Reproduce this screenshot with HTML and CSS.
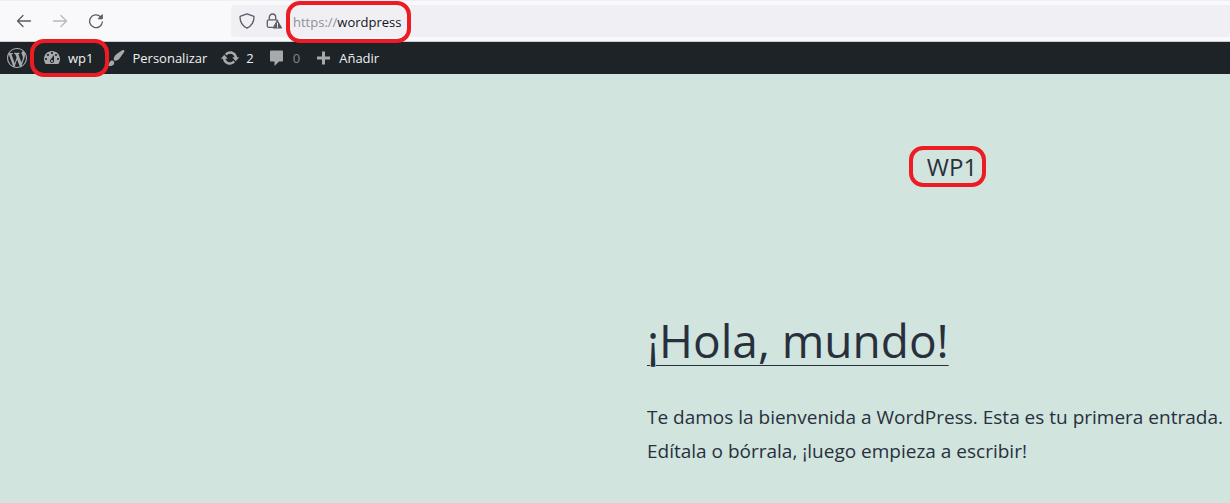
FILE: index.html
```html
<!DOCTYPE html>
<html lang="es">
<head>
<meta charset="utf-8">
<meta name="viewport" content="width=device-width, initial-scale=1">
<title>WP1</title>
<link rel="stylesheet" href="styles.css">
</head>
<body>
<header class="browser">
  <div class="browser-nav">
    <button class="nav-button" type="button" aria-label="Atrás"><svg viewBox="0 0 16 16"><path d="M14.500 8H1.500M7 2.500 1.500 8 7 13.500"/></svg></button>
    <button class="nav-button" type="button" aria-label="Adelante" disabled><svg viewBox="0 0 16 16"><path d="M1.500 8h13M9 2.500 14.500 8 9 13.500"/></svg></button>
    <button class="nav-button" type="button" aria-label="Recargar"><svg viewBox="0 0 16 16"><path d="M12.500 3.700A6.400 6.400 0 1 0 14.400 8.800"/><path class="solid" d="M14.300 2v3.800h-3.800z"/></svg></button>
  </div>
  <div class="address">
    <svg class="address-icon" viewBox="0 0 16 16" aria-hidden="true"><path d="M8 .9 14.300 3.200c.5.200.7.500.7.900C15 9.200 12.500 13 8 15.200 3.500 13 1 9.200 1 4.100c0-.4.200-.7.700-.9z"/></svg>
    <svg class="address-icon" viewBox="0 0 16 16" aria-hidden="true"><path d="M6.500 14.300H2.800c-.9 0-1.500-.6-1.500-1.500V8.300c0-.9.600-1.500 1.500-1.500h7.500c.6 0 1 .2 1.300.6M3.300 6.800V4.200a3.200 3.200 0 0 1 6.400 0v2.600"/><path class="solid" d="M11.500 7.800 15.700 15H7.300z"/><path class="mark" d="M11.500 10.200v2.200M11.500 13.200v1"/></svg>
    <a class="url ring" href="#"><span class="scheme">https://</span>wordpress</a>
  </div>
</header>

<nav class="admin" aria-label="Barra de herramientas">
  <a class="admin-item logo" href="#" aria-label="Acerca de WordPress"><svg viewBox="0 0 20 20"><path d="M20 10c0-5.510-4.490-10-10-10C4.480 0 0 4.490 0 10c0 5.520 4.480 10 10 10 5.510 0 10-4.480 10-10zM7.780 15.370L4.370 6.220c.55-.02 1.170-.08 1.170-.08.5-.06.44-1.130-.06-1.110 0 0-1.450.11-2.370.11-.18 0-.37 0-.58-.01C4.120 2.690 6.870 1.110 10 1.110c2.330 0 4.450.87 6.050 2.340-.68-.11-1.650.39-1.650 1.580 0 .74.45 1.360.9 2.100.35.61.55 1.360.55 2.460 0 1.490-1.400 5-1.400 5l-3.030-8.370c.54-.02.82-.17.82-.17.5-.05.44-1.250-.06-1.220 0 0-1.440.12-2.380.12-.87 0-2.330-.12-2.330-.12-.5-.03-.56 1.200-.06 1.220l.92.08 1.260 3.410zM17.410 10c.24-.64.74-1.870.43-4.250.7 1.290 1.050 2.710 1.050 4.250 0 3.290-1.730 6.240-4.400 7.780.97-2.590 1.940-5.200 2.920-7.780zM6.100 18.090C3.120 16.650 1.110 13.530 1.110 10c0-1.300.23-2.480.72-3.590C3.250 10.300 4.670 14.200 6.100 18.090zm4.030-6.630l2.580 6.980c-.86.29-1.760.45-2.710.45-.79 0-1.570-.11-2.290-.33.81-2.380 1.620-4.740 2.420-7.100z"/></svg></a>
  <a class="admin-item site ring" href="#"><svg viewBox="0 0 20 20"><path fill-rule="evenodd" d="M3.760 16h12.480c1.100-1.370 1.760-3.110 1.760-5 0-4.420-3.580-8-8-8s-8 3.580-8 8c0 1.890.66 3.630 1.760 5zM10 4c.55 0 1 .45 1 1s-.45 1-1 1-1-.45-1-1 .45-1 1-1zM6 6c.55 0 1 .45 1 1s-.45 1-1 1-1-.45-1-1 .45-1 1-1zm8 0c.55 0 1 .45 1 1s-.45 1-1 1-1-.45-1-1 .45-1 1-1zm-5.370 5.550L12 7v6c0 1.100-.9 2-2 2s-2-.9-2-2c0-.57.24-1.080.63-1.450zM4 10c.55 0 1 .45 1 1s-.45 1-1 1-1-.45-1-1 .45-1 1-1zm12 0c.55 0 1 .45 1 1s-.45 1-1 1-1-.45-1-1 .45-1 1-1zm-6 2c-.55 0-1 .45-1 1s.45 1 1 1 1-.45 1-1-.45-1-1-1z"/></svg>wp1</a>
  <a class="admin-item" href="#"><svg viewBox="0 0 20 20"><path d="M18.330 3.570s.27-.8-.31-1.360c-.53-.52-1.220-.24-1.220-.24-.61.3-5.760 3.470-7.670 5.570-.86.96-2.060 3.790-1.090 4.820.92.98 3.960-.17 4.790-1 2.060-2.060 5.210-7.170 5.500-7.790zM1.400 17.650c2.370-1.560 1.460-3.410 3.230-4.640.93-.65 2.220-.62 3.080.29.63.67.8 2.570-.16 3.460-1.570 1.450-4 1.550-6.150.89z"/></svg>Personalizar</a>
  <a class="admin-item" href="#"><svg viewBox="0 0 20 20"><path d="M10.200 3.280c3.530 0 6.430 2.610 6.920 6h2.080l-3.500 4-3.500-4h2.320c-.45-1.970-2.210-3.450-4.320-3.450-1.450 0-2.730.71-3.540 1.780L4.950 5.660C6.230 4.200 8.110 3.280 10.200 3.280zm-.4 13.440c-3.520 0-6.430-2.610-6.920-6H.8l3.500-4c1.170 1.330 2.330 2.670 3.500 4H5.480c.45 1.970 2.210 3.450 4.320 3.450 1.450 0 2.730-.71 3.540-1.780l1.710 1.950c-1.280 1.460-3.150 2.380-5.250 2.380z"/></svg>2</a>
  <a class="admin-item none" href="#"><svg viewBox="0 0 20 20"><path d="M4 2.500h11c.6 0 1 .4 1 1v9c0 .6-.4 1-1 1h-3l-4.500 4.500v-4.500H4c-.6 0-1-.4-1-1v-9c0-.6.400-1 1-1z"/></svg>0</a>
  <a class="admin-item" href="#"><svg viewBox="0 0 20 20"><path d="M17 8.500v3h-5v5H9v-5H4v-3h5v-5h3v5h5z"/></svg>Añadir</a>
</nav>

<main class="page">
  <div class="column">
    <p class="site-title"><a class="ring" href="#">WP1</a></p>
    <article>
      <h1 class="entry-title"><a href="#">¡Hola, mundo!</a></h1>
      <p class="entry-text">Te damos la bienvenida a WordPress. Esta es tu primera entrada. Edítala o bórrala, ¡luego empieza a escribir!</p>
    </article>
  </div>
</main>
</body>
</html>
```
FILE: styles.css
```css
* {
  box-sizing: border-box;
}

body {
  display: flex;
  flex-direction: column;
  min-height: 100vh;
  margin: 0;
  overflow-x: hidden;
  background: #d1e4dd;
  color: #28303d;
  font-family: "Open Sans", "Noto Sans", sans-serif;
}

a {
  color: inherit;
  text-decoration: none;
}

svg {
  flex: none;
}

/* Red highlight around an element */
.ring {
  position: relative;
}

.ring::after {
  content: "";
  position: absolute;
  z-index: 1;
  inset: -3px -12px;
  border: 4px solid #ed1c24;
  border-radius: 14px;
  pointer-events: none;
}

.browser {
  display: flex;
  align-items: center;
  height: 42px;
  padding-left: 12px;
  border-top: 1px solid #f0f0f4;
  border-bottom: 1px solid #ccccd0;
  background: #f9f9fb;
}

.browser-nav {
  display: flex;
  gap: 12px;
  width: 219px;
}

.nav-button {
  display: grid;
  place-items: center;
  width: 24px;
  height: 24px;
  padding: 0;
  border: 0;
  background: none;
}

.nav-button:disabled {
  opacity: 0.4;
}

.nav-button svg,
.address-icon {
  width: 16px;
  height: 16px;
  fill: none;
  stroke: #5b5b66;
  stroke-width: 1.3;
  stroke-linecap: round;
  stroke-linejoin: round;
}

svg .solid {
  fill: #5b5b66;
  stroke-width: 1;
}

svg .mark {
  stroke: #f0f0f4;
  stroke-width: 1;
}

.address {
  display: flex;
  flex: 1;
  align-items: center;
  gap: 11px;
  height: 32px;
  padding-left: 8px;
  border-radius: 4px 0 0 4px;
  background: #f0f0f4;
}

.url {
  padding-top: 2px;
  color: #15141a;
  font-size: 13px;
  line-height: 20px;
}

.url.ring::after {
  inset: -9px -10px -11px -7px;
}

.scheme {
  color: #8f8f98;
}

.admin {
  display: flex;
  align-items: center;
  gap: 13px;
  height: 32px;
  padding-left: 7px;
  background: #1d2327;
  color: #f0f0f1;
  font-size: 13px;
  line-height: 32px;
}

.admin-item {
  display: flex;
  align-items: center;
  gap: 6px;
}

.admin-item.logo {
  margin-right: 2px;
}

.admin-item svg {
  width: 20px;
  height: 20px;
  fill: #a7aaad;
}

.admin-item.none {
  color: #82878c;
}

.site.ring::after {
  inset: -3px -16px -3px -12px;
}

.page {
  flex: 1;
  padding: 71px 0 32px 52.6%;
}

.column {
  width: 610px;
}

.site-title {
  margin: 0 0 120px;
  font-size: 24px;
  line-height: 44px;
  text-align: center;
}

.site-title .ring::after {
  inset: -4px -9px -4px -18px;
}

.entry-title {
  margin: 0 0 29px;
  font-size: 46px;
  font-weight: 400;
  line-height: 62px;
}

.entry-title a {
  text-decoration: underline;
  text-decoration-thickness: 1px;
  text-underline-offset: 7px;
}

.entry-text {
  margin: 0;
  font-size: 19px;
  line-height: 34px;
}
```
